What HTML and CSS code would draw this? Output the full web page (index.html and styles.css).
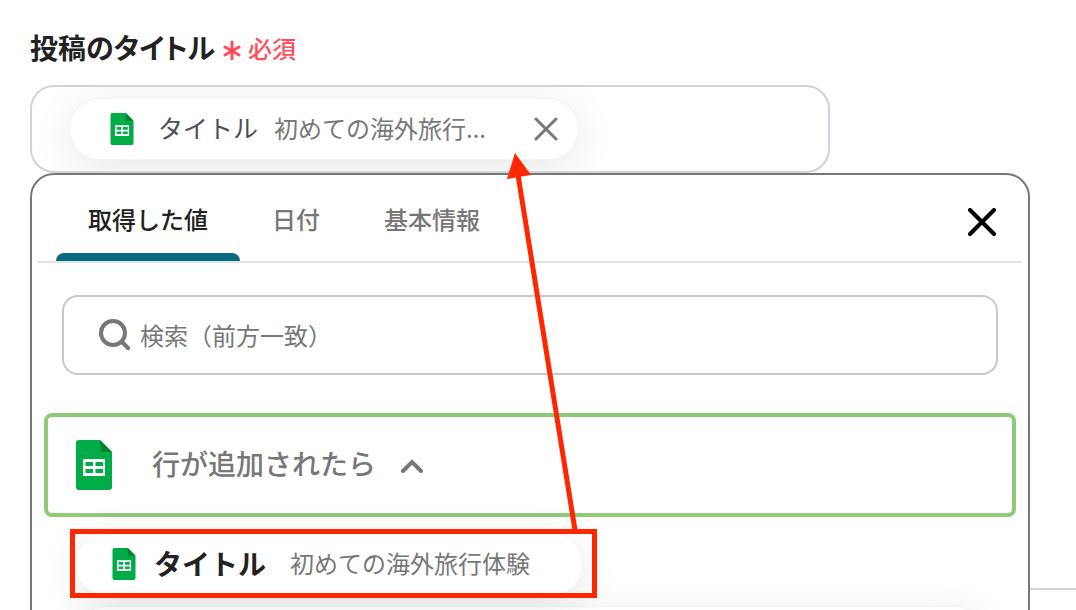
FILE: index.html
```html
<!DOCTYPE html>
<html lang="ja">
<head>
  <meta charset="UTF-8" />
  <meta name="viewport" content="width=device-width, initial-scale=1.0"/>
  <title>投稿のタイトル</title>
  <link rel="stylesheet" href="styles.css">
</head>
<body>

  <svg class="sprite" aria-hidden="true">
    <symbol id="sheet" viewBox="0 0 36 50">
      <path fill="#00ac47" d="M3 0H24L36 12V47a3 3 0 0 1-3 3H3a3 3 0 0 1-3-3V3a3 3 0 0 1 3-3z"/>
      <path fill="#00832d" d="M24 0L36 12H24z"/>
      <path fill="#fff" fill-rule="evenodd" d="M7 19H29V36H7zM9.500 22V26H17V22zM19.500 22V26H27V22zM9.500 29V33H17V29zM19.500 29V33H27V29z"/>
    </symbol>
  </svg>

  <main class="page">
    <div class="label-row">
      <span class="field-label" id="titleLabel">投稿のタイトル</span>
      <span class="required">
        <svg class="asterisk" viewBox="0 0 18 20" aria-hidden="true"><path d="M9 2V19M2 7L16 15M16 7L2 15"/></svg>
        必須
      </span>
    </div>

    <div class="field" role="group" aria-labelledby="titleLabel">
      <div class="chip">
        <svg class="sheet-icon"><use href="#sheet"/></svg>
        <span class="chip-name">タイトル</span>
        <span class="chip-value">初めての海外旅行...</span>
        <button class="chip-remove" type="button" aria-label="削除">
          <svg viewBox="0 0 24 24"><path d="M2 2L22 22M22 2L2 22"/></svg>
        </button>
      </div>
    </div>

    <div class="below">
      <div class="panel">
        <div class="tabs">
          <button class="tab active" type="button">取得した値</button>
          <button class="tab" type="button">日付</button>
          <button class="tab" type="button">基本情報</button>
          <button class="panel-close" type="button" aria-label="閉じる">
            <svg viewBox="0 0 28 28"><path d="M2 2L26 26M26 2L2 26"/></svg>
          </button>
        </div>

        <label class="search">
          <svg viewBox="0 0 32 32" aria-hidden="true"><circle cx="15" cy="14" r="12"/><path d="M24 23L30 29"/></svg>
          <input type="text" placeholder="検索（前方一致）" aria-label="検索">
        </label>

        <button class="group" type="button">
          <svg class="group-icon"><use href="#sheet"/></svg>
          <span class="group-name">行が追加されたら</span>
          <svg class="chevron" viewBox="0 0 24 16"><path d="M3 14L12 5L21 14"/></svg>
        </button>

        <div class="items">
          <div class="item">
            <svg class="sheet-icon"><use href="#sheet"/></svg>
            <span class="item-name">タイトル</span>
            <span class="item-value">初めての海外旅行体験</span>
            <div class="marker">
              <svg class="arrow" viewBox="0 0 70 377" aria-hidden="true">
                <path class="shaft" d="M11 22L68 377"/>
                <path class="head" d="M8 0L24 22L0 26z"/>
              </svg>
            </div>
          </div>
          <div class="item wide"></div>
        </div>
      </div>
    </div>
    <hr class="divider">
  </main>

</body>
</html>
```

FILE: styles.css
```css
* {
  box-sizing: border-box;
}

body {
  font-family: "Noto Sans CJK JP", sans-serif;
  background-color: #ffffff;
  margin: 0;
  color: #222222;
}

svg {
  display: block;
  flex-shrink: 0;
  fill: none;
  stroke-linecap: round;
}

button {
  font-family: inherit;
  background: none;
  border: none;
  padding: 0;
  cursor: pointer;
}

.sprite {
  position: absolute;
  width: 0;
  height: 0;
}

.page {
  height: 100vh;
  overflow: hidden;
  padding: 27px 0 0 30px;
}

.label-row {
  display: flex;
  align-items: center;
  gap: 8px;
  height: 40px;
  margin-bottom: 18px;
}

.field-label {
  font-size: 28px;
  font-weight: 700;
  font-feature-settings: "palt";
}

.required {
  display: flex;
  align-items: center;
  gap: 7px;
  font-size: 24px;
  font-weight: 500;
  color: #ff4d5e;
}

.asterisk {
  width: 18px;
  height: 20px;
  margin-top: 6px;
  stroke: #ff4d5e;
  stroke-width: 3;
}

.field {
  display: flex;
  align-items: center;
  width: calc((100% - 46px) * 0.8);
  height: 88px;
  padding-left: 38px;
  border: 2px solid #ced4da;
  border-radius: 24px;
  overflow: hidden;
}

.chip {
  display: flex;
  align-items: center;
  height: 60px;
  padding: 0 20px 0 40px;
  border-radius: 30px;
  background: #ffffff;
  box-shadow: 0 0 0 1px #f4f4f4, 0 8px 40px rgba(0, 0, 0, 0.1);
  white-space: nowrap;
}

.chip-name,
.chip-value,
.item-value,
.group-name {
  padding-bottom: 4px;
}

.sheet-icon {
  width: 24px;
  height: 32px;
}

.chip-name {
  margin-left: 24px;
  font-size: 25px;
  color: #495057;
}

.chip-value {
  margin-left: 16px;
  font-size: 24px;
  color: #777777;
}

.chip-remove {
  margin-left: 48px;
}

.chip-remove svg {
  width: 24px;
  height: 24px;
  stroke: #777777;
  stroke-width: 3;
}

/* dropdown lies over the rest of the form */
.below {
  position: relative;
  height: 415px;
  margin-right: 46px;
}

.panel {
  position: absolute;
  top: 0;
  left: 0;
  right: 0;
  z-index: 1;
  height: 800px;
  padding: 0 6px;
  border: 2px solid #777777;
  border-radius: 24px;
  background: #ffffff;
}

.tabs {
  display: flex;
  height: 88px;
  padding: 0 26px 0 18px;
  border-bottom: 2px solid #e3e3e3;
}

.tab {
  position: relative;
  padding: 0 32px;
  font-size: 24px;
  font-weight: 500;
  color: #777777;
}

.tab.active {
  color: #222222;
}

.tab.active::after {
  content: "";
  position: absolute;
  left: 0;
  right: 0;
  bottom: 0;
  height: 8px;
  border-radius: 8px 8px 0 0;
  background: #0b6a83;
}

.panel-close {
  margin-left: auto;
  padding-top: 8px;
}

.panel-close svg {
  width: 28px;
  height: 28px;
  stroke: #000000;
  stroke-width: 4;
}

.search {
  display: flex;
  align-items: center;
  gap: 10px;
  height: 80px;
  margin: 32px 24px 38px;
  padding: 0 34px;
  border: 2px solid #c8c8c8;
  border-radius: 16px;
}

.search svg {
  width: 32px;
  height: 32px;
  stroke: #777777;
  stroke-width: 4;
}

.search input {
  flex: 1;
  min-width: 0;
  padding: 0 0 2px;
  border: none;
  outline: none;
  font-family: inherit;
  font-size: 24px;
  color: #222222;
}

.search input::placeholder {
  color: #777777;
}

.group {
  display: flex;
  align-items: center;
  width: calc(100% - 12px);
  height: 104px;
  margin: 0 6px;
  padding: 0 28px;
  border: 4px solid #8ccb7a;
  border-radius: 8px;
  font-size: 28px;
  font-weight: 500;
  color: #777777;
}

.group-icon {
  width: 36px;
  height: 50px;
  margin-right: 40px;
}

.chevron {
  width: 24px;
  height: 16px;
  margin-left: 24px;
  stroke: #777777;
  stroke-width: 4;
}

.items {
  display: flex;
  flex-direction: column;
  align-items: flex-start;
  gap: 12px;
  padding: 16px 38px 0;
}

.item {
  position: relative;
  display: flex;
  align-items: center;
  height: 62px;
  padding: 0 52px 0 36px;
  border-radius: 31px;
  background: #ffffff;
  box-shadow: 0 0 0 1px #f4f4f4, 0 8px 40px rgba(0, 0, 0, 0.1);
  white-space: nowrap;
}

.item.wide {
  z-index: -1;
  width: 100%;
}

.item-name {
  margin-left: 18px;
  padding-bottom: 2px;
  font-size: 28px;
  font-weight: 700;
}

.item-value {
  margin-left: 24px;
  font-size: 24px;
  color: #777777;
}

/* red guide frame and arrow */
.marker {
  position: absolute;
  inset: -4px -15px -3px -6px;
  border: 5px solid #ff2600;
}

.arrow {
  position: absolute;
  right: 15px;
  bottom: calc(100% + 4px);
  width: 70px;
  height: 377px;
  overflow: visible;
}

.shaft {
  stroke: #ff2600;
  stroke-width: 5;
}

.head {
  fill: #ff2600;
}

.divider {
  margin: 0;
  border: none;
  border-top: 2px solid #ced4da;
}
```
